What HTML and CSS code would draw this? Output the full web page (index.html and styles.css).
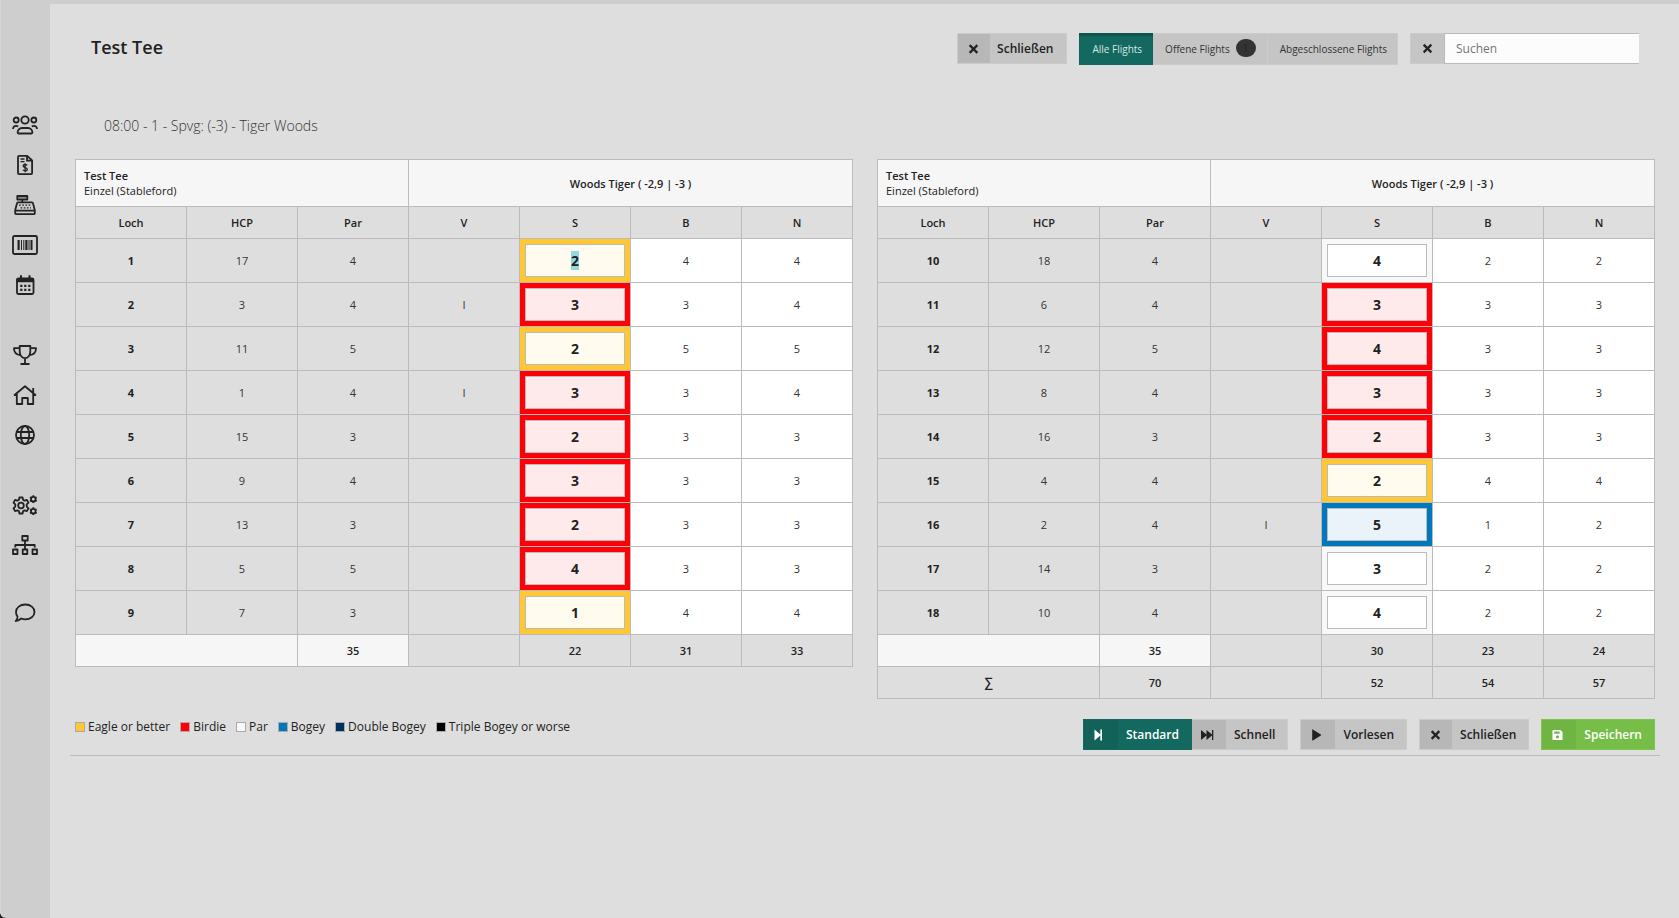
FILE: index.html
```html
<!DOCTYPE html>
<html lang="de">
<head>
<meta charset="utf-8">
<title>Test Tee</title>
<link rel="stylesheet" href="styles.css">
</head>
<body>
<nav class="sidebar" aria-label="Hauptmenü">
  <div class="nav-group">
    <a href="#" aria-label="Spieler"><svg viewBox="0 0 26 20"><circle cx="13" cy="5" r="3.7"/><circle cx="4.200" cy="5" r="2.500"/><circle cx="21.800" cy="5" r="2.500"/><path d="M6.500 18.500h13c.6 0 .9-.4.9-.9 0-2.600-1.900-4.600-4.400-4.600h-6c-2.500 0-4.400 2-4.400 4.600 0 .5.300.9.900.9zM1 14c.2-2 1.400-3.200 3-3.200.9 0 1.600.2 2.200.7M25 14c-.2-2-1.400-3.200-3-3.200-.9 0-1.600.2-2.200.7"/></svg></a>
    <a href="#" aria-label="Rechnungen"><svg viewBox="0 0 26 20"><path d="M7.500.9h7.700l4.900 4.500v12.700c0 .6-.4 1-1 1H7c-.6 0-1-.4-1-1V1.900c0-.6.4-1 1-1zM15 1v4.700h5"/><path class="thin" d="M8.500 4h4M8.500 6.700h4M15.200 10.300c-.5-.6-1.200-.8-2.100-.8-1.200 0-2 .6-2 1.500 0 2 4.200 1.200 4.200 3.200 0 1-.9 1.600-2.100 1.600-1 0-1.800-.3-2.300-.9M13.100 8.200v9"/></svg></a>
    <a href="#" aria-label="Kasse"><svg viewBox="0 0 26 20"><path class="grey" d="M5.300 1h10v3.600h-10z"/><path d="M10.300 4.600v2.900M6 7.400h14c.5 0 .9.300 1 .8l1.800 7.100v3c0 .5-.3.800-.8.800H4c-.5 0-.8-.3-.8-.8v-3L5 8.200c.1-.5.500-.8 1-.8zM3.400 15.600h19.200"/><path class="thin" stroke-dasharray="1.700 1.500" d="M7 10.200h12.500M8.500 12.800h10.500"/></svg></a>
    <a href="#" aria-label="Artikel"><svg viewBox="0 0 26 20"><rect x="1" y="1" width="24" height="18" rx="1.500"/><path class="solid" d="M5.500 5h2.200v10H5.500zM9 5h1v10H9zM11.300 5h1v10h-1zM13.300 5h2.200v10h-2.200zM16.500 5h1v10h-1zM18.500 5h2v10h-2z"/></svg></a>
    <a href="#" aria-label="Kalender"><svg viewBox="0 0 26 20"><rect x="5" y="3.500" width="16.500" height="15.500" rx="1.500"/><path class="solid" d="M4.500 3.500h17.500v3.700H4.500zM8 .3h2v4H8zM16.500.3h2v4h-2z"/><path stroke-width="2.200" stroke-dasharray="2.200 1.800" d="M8.200 10.800h11M8.200 14.800h11"/></svg></a>
  </div>
  <div class="nav-group">
    <a href="#" aria-label="Turniere"><svg viewBox="0 0 26 20"><path d="M7.700 1h10.600v5.500c0 3.800-2.300 6.700-5.300 6.700s-5.300-2.900-5.300-6.700zM7.700 3.200H2c0 4 2.300 6.500 6.500 7M18.300 3.200H24c0 4-2.300 6.500-6.500 7M13 13.200v5M8.500 19h9"/></svg></a>
    <a href="#" aria-label="Startseite"><svg viewBox="0 0 26 20"><path d="M2 10.500 13 1.300l11 9.200M4.800 8.500V19h5.400v-6h5.600v6h5.400V8.500M21.200 3v5"/></svg></a>
    <a href="#" aria-label="Web"><svg viewBox="0 0 26 20"><circle cx="13" cy="10" r="9"/><ellipse cx="13" cy="10" rx="4.200" ry="9"/><path d="M4.500 7h17M4.500 13h17"/></svg></a>
  </div>
  <div class="nav-group">
    <a href="#" aria-label="Einstellungen"><svg viewBox="0 0 26 20"><circle cx="9" cy="10.500" r="2.800"/><path d="M7.400 2.500h3.200l.5 2.400 1.500.8 2.300-.8 1.600 2.800-1.800 1.700v2.200l1.800 1.700-1.600 2.800-2.300-.8-1.500.8-.5 2.400H7.400l-.5-2.400-1.500-.8-2.300.8-1.600-2.800 1.800-1.700V9.400L1.500 7.700l1.600-2.800 2.300.8 1.500-.8z"/><circle cx="21.300" cy="4.200" r="2.300"/><circle cx="21.300" cy="16.200" r="2.300"/><path d="M21.300.3v1.600M21.300 6.500v1.600M18 2.200l1.400.8M23.200 5.400l1.400.8M18 6.200l1.400-.8M23.200 3l1.400-.8M21.300 12.300v1.600M21.300 18.500V20M18 14.200l1.400.8M23.200 17.400l1.400.8M18 18.200l1.400-.8M23.200 15l1.400-.8"/></svg></a>
    <a href="#" aria-label="Struktur"><svg viewBox="0 0 26 20"><path d="M10.300 1h5.400v4.500h-5.400zM1 14.500h4.500V19H1zM10.700 14.500h4.600V19h-4.600zM20.500 14.500H25V19h-4.500zM13 5.500v9M3.300 12.500V10h19.400v2.500"/></svg></a>
  </div>
  <div class="nav-group">
    <a href="#" aria-label="Nachrichten"><svg viewBox="0 0 26 20"><path d="M13.300 1.500c5.200 0 9.200 3.200 9.200 7.400s-4 7.400-9.200 7.400c-1.500 0-2.900-.3-4.100-.8C7.500 17 5.500 18 3.700 18c1.200-1.300 1.800-2.700 1.900-4.200C4.600 12.500 4 10.800 4 8.900c0-4.200 4.100-7.400 9.300-7.400z"/></svg></a>
  </div>
</nav>
<main class="content">
  <header class="topbar">
    <h1>Test Tee</h1>
    <div class="tools">
      <button class="btn compact" type="button"><span class="ico"><svg viewBox="0 0 10 10"><path class="x" d="M1.500 1.500l7 7M8.500 1.500l-7 7"/></svg></span><span class="label">Schließen</span></button>
      <div class="filters">
        <button class="filter active" type="button">Alle Flights</button>
        <button class="filter" type="button">Offene Flights <span class="badge">1</span></button>
        <button class="filter" type="button">Abgeschlossene Flights</button>
      </div>
      <div class="search">
        <button class="clear" type="button" aria-label="Suche leeren"><svg viewBox="0 0 10 10"><path class="x" d="M1.500 1.500l7 7M8.500 1.500l-7 7"/></svg></button>
        <input type="text" placeholder="Suchen" aria-label="Suchen">
      </div>
    </div>
  </header>
  <h2>08:00 - 1 - Spvg: (-3) - Tiger Woods</h2>
  <section class="scorecard">
    <div class="cards">
      <table>
        <thead>
          <tr class="title"><th colspan="3" class="event">Test Tee<span>Einzel (Stableford)</span></th><th colspan="4">Woods Tiger ( -2,9 | -3 )</th></tr>
          <tr><th>Loch</th><th>HCP</th><th>Par</th><th>V</th><th>S</th><th>B</th><th>N</th></tr>
        </thead>
        <tbody>
          <tr><th>1</th><td>17</td><td>4</td><td></td><td class="score eagle"><input id="first-score" value="2" aria-label="Loch 1"></td><td class="pts">4</td><td class="pts">4</td></tr>
          <tr><th>2</th><td>3</td><td>4</td><td>I</td><td class="score birdie"><input value="3" aria-label="Loch 2"></td><td class="pts">3</td><td class="pts">4</td></tr>
          <tr><th>3</th><td>11</td><td>5</td><td></td><td class="score eagle"><input value="2" aria-label="Loch 3"></td><td class="pts">5</td><td class="pts">5</td></tr>
          <tr><th>4</th><td>1</td><td>4</td><td>I</td><td class="score birdie"><input value="3" aria-label="Loch 4"></td><td class="pts">3</td><td class="pts">4</td></tr>
          <tr><th>5</th><td>15</td><td>3</td><td></td><td class="score birdie"><input value="2" aria-label="Loch 5"></td><td class="pts">3</td><td class="pts">3</td></tr>
          <tr><th>6</th><td>9</td><td>4</td><td></td><td class="score birdie"><input value="3" aria-label="Loch 6"></td><td class="pts">3</td><td class="pts">3</td></tr>
          <tr><th>7</th><td>13</td><td>3</td><td></td><td class="score birdie"><input value="2" aria-label="Loch 7"></td><td class="pts">3</td><td class="pts">3</td></tr>
          <tr><th>8</th><td>5</td><td>5</td><td></td><td class="score birdie"><input value="4" aria-label="Loch 8"></td><td class="pts">3</td><td class="pts">3</td></tr>
          <tr><th>9</th><td>7</td><td>3</td><td></td><td class="score eagle"><input value="1" aria-label="Loch 9"></td><td class="pts">4</td><td class="pts">4</td></tr>
        </tbody>
        <tfoot>
          <tr><td colspan="2" class="light"></td><td class="light">35</td><td></td><td>22</td><td>31</td><td>33</td></tr>
        </tfoot>
      </table>
      <table>
        <thead>
          <tr class="title"><th colspan="3" class="event">Test Tee<span>Einzel (Stableford)</span></th><th colspan="4">Woods Tiger ( -2,9 | -3 )</th></tr>
          <tr><th>Loch</th><th>HCP</th><th>Par</th><th>V</th><th>S</th><th>B</th><th>N</th></tr>
        </thead>
        <tbody>
          <tr><th>10</th><td>18</td><td>4</td><td></td><td class="score par"><input value="4" aria-label="Loch 10"></td><td class="pts">2</td><td class="pts">2</td></tr>
          <tr><th>11</th><td>6</td><td>4</td><td></td><td class="score birdie"><input value="3" aria-label="Loch 11"></td><td class="pts">3</td><td class="pts">3</td></tr>
          <tr><th>12</th><td>12</td><td>5</td><td></td><td class="score birdie"><input value="4" aria-label="Loch 12"></td><td class="pts">3</td><td class="pts">3</td></tr>
          <tr><th>13</th><td>8</td><td>4</td><td></td><td class="score birdie"><input value="3" aria-label="Loch 13"></td><td class="pts">3</td><td class="pts">3</td></tr>
          <tr><th>14</th><td>16</td><td>3</td><td></td><td class="score birdie"><input value="2" aria-label="Loch 14"></td><td class="pts">3</td><td class="pts">3</td></tr>
          <tr><th>15</th><td>4</td><td>4</td><td></td><td class="score eagle"><input value="2" aria-label="Loch 15"></td><td class="pts">4</td><td class="pts">4</td></tr>
          <tr><th>16</th><td>2</td><td>4</td><td>I</td><td class="score bogey"><input value="5" aria-label="Loch 16"></td><td class="pts">1</td><td class="pts">2</td></tr>
          <tr><th>17</th><td>14</td><td>3</td><td></td><td class="score par"><input value="3" aria-label="Loch 17"></td><td class="pts">2</td><td class="pts">2</td></tr>
          <tr><th>18</th><td>10</td><td>4</td><td></td><td class="score par"><input value="4" aria-label="Loch 18"></td><td class="pts">2</td><td class="pts">2</td></tr>
        </tbody>
        <tfoot>
          <tr><td colspan="2" class="light"></td><td class="light">35</td><td></td><td>30</td><td>23</td><td>24</td></tr>
          <tr><td colspan="2" class="sum">∑</td><td>70</td><td></td><td>52</td><td>54</td><td>57</td></tr>
        </tfoot>
      </table>
    </div>
    <div class="actions">
      <ul class="legend">
        <li><i class="swatch eagle"></i>Eagle or better</li>
        <li><i class="swatch birdie"></i>Birdie</li>
        <li><i class="swatch par"></i>Par</li>
        <li><i class="swatch bogey"></i>Bogey</li>
        <li><i class="swatch double"></i>Double Bogey</li>
        <li><i class="swatch triple"></i>Triple Bogey or worse</li>
      </ul>
      <div class="buttons">
        <div class="pair">
          <button class="btn teal" type="button"><span class="ico"><svg viewBox="0 0 10 12"><path class="fill" d="M1 .5v11L6.800 6.600V11.500h1.700V.5H6.800v4.900z"/></svg></span><span class="label">Standard</span></button>
          <button class="btn" type="button"><span class="ico"><svg class="wide" viewBox="0 0 14 12"><path class="fill" d="M1 1v10l5.500-4.500V11L12 6.500V11h1.300V1H12v4.500L6.500 1v4.500z"/></svg></span><span class="label">Schnell</span></button>
        </div>
        <button class="btn" type="button"><span class="ico"><svg viewBox="0 0 11 14"><path class="fill" d="M.5.8v12.400c0 .4.400.5.700.3l9.400-6c.4-.2.400-.8 0-1L1.200.5C.9.300.5.400.5.800z"/></svg></span><span class="label">Vorlesen</span></button>
        <button class="btn narrow" type="button"><span class="ico"><svg viewBox="0 0 10 10"><path class="x" d="M1.500 1.500l7 7M8.500 1.500l-7 7"/></svg></span><span class="label">Schließen</span></button>
        <button class="btn green" type="button"><span class="ico"><svg viewBox="0 0 12 12"><path class="fill" fill-rule="evenodd" d="M1.500.5h7.700l2.300 2.300v7.700c0 .6-.4 1-1 1h-9c-.6 0-1-.4-1-1v-9c0-.6.4-1 1-1zM2.500 2.200v2.400h5.800V2.200zM6 6.300a1.700 1.700 0 1 0 0 3.400 1.700 1.700 0 0 0 0-3.400z"/></svg></span><span class="label">Speichern</span></button>
      </div>
    </div>
  </section>
</main>
<script src="main.js"></script>
</body>
</html>
```
FILE: styles.css
```css
* { box-sizing: border-box; }

html { background: #1a1a1a; }

body {
  margin: 0;
  min-height: 100vh;
  display: flex;
  font-family: "Open Sans", "Noto Sans", sans-serif;
  font-size: 12px;
  color: #222;
  background: #cecece;
  border-bottom-left-radius: 6px;
}

button, input { font: inherit; color: inherit; }

.sidebar {
  flex: none;
  width: 50px;
  padding: 105px 1px 0 0;
  border-left: 1px solid #d6d6d6;
  border-bottom-left-radius: 6px;
}
.nav-group { margin-bottom: 30px; }
.nav-group:nth-last-child(2) { margin-bottom: 28px; }
.sidebar a {
  display: flex;
  height: 40px;
  align-items: center;
  justify-content: center;
}
.sidebar svg {
  width: 26px;
  height: 20px;
  overflow: visible;
  fill: none;
  stroke: #222;
  stroke-width: 1.8;
  stroke-linejoin: round;
}
.sidebar .thin { stroke-width: 1.3; }
.sidebar .grey { fill: #888; }
.sidebar .solid { fill: #222; stroke: none; }

.content {
  flex: 1;
  min-width: 0;
  margin-top: 4px;
  padding: 29px 19px 0 20px;
  background: #dedede;
}

.topbar {
  display: flex;
  justify-content: space-between;
  align-items: flex-start;
  padding: 0 21px;
}
h1 { margin: 0; font-size: 18px; line-height: 28px; font-weight: 600; }
h2 {
  margin: 48px 34px 21px;
  font-size: 14px;
  line-height: 25px;
  font-weight: 300;
  color: #333;
}

.tools { display: flex; gap: 12px; align-items: flex-start; }

.btn {
  display: flex;
  height: 31px;
  padding: 0;
  border: 1px solid #cbcbcb;
  background: #c5c5c5;
  font-weight: 600;
}
.ico {
  display: flex;
  align-items: center;
  justify-content: center;
  width: 34px;
  height: 100%;
  padding-right: 4px;
  background: #b7b7b7;
}
.label { padding: 0 12px 0 8px; line-height: 29px; }
.compact .ico, .narrow .ico { width: 32px; padding: 0 2px 0 0; }
.compact .label { padding: 0 13px 0 7px; }
.btn svg, .clear svg { width: 11px; height: 11px; }
.ico svg { height: 12px; }
.btn .wide { width: 14px; }
.fill { fill: currentColor; }
.x { fill: none; stroke: #222; stroke-width: 2; }
.teal { background: #13695f; border-color: #13695f; color: #fff; }
.teal .ico { background: #12625a; }
.green { background: #76be48; border-color: #7bc74c; color: #fff; }
.green .ico { background: #70b544; }

.filters { display: flex; }
.filter {
  display: flex;
  align-items: center;
  gap: 6px;
  height: 32px;
  padding: 0 10px 0 12px;
  border: 1px solid #cbcbcb;
  border-left-width: 0;
  background: #c5c5c5;
  color: #333;
  font-size: 10px;
}
.filter.active {
  border: 0;
  padding: 0 11px 0 13px;
  background: #13695f;
  color: #d7e6e4;
  box-shadow: inset 0 3px 2px #0d544c;
}
.badge {
  width: 20px;
  height: 18px;
  margin: 0 1px 2px 0;
  border-radius: 9px;
  background: #333;
  color: #222;
  line-height: 18px;
}

.search { display: flex; height: 31px; }
.clear {
  display: flex;
  align-items: center;
  justify-content: center;
  width: 34px;
  padding: 0;
  border: 1px solid #cbcbcb;
  border-right: 0;
  background: #c5c5c5;
}
.search input {
  width: 195px;
  padding: 0 11px;
  border: 1px solid #bbb;
  border-right: 0;
  background: #fcfcfc;
}
.search input::placeholder { color: #757575; }

.scorecard { padding: 0 5px 5px; border-bottom: 1px solid #bbb; margin: 0; }
.cards {
  display: grid;
  grid-template-columns: 1fr 1fr;
  gap: 24px;
  align-items: start;
}
table {
  width: 100%;
  table-layout: fixed;
  border-collapse: collapse;
  font-size: 11px;
  line-height: 15px;
  text-align: center;
}
th, td { height: 32px; padding: 0; border: 1px solid #bbb; }
th { font-weight: 600; }
.title th { height: 47px; background: #f6f6f6; }
.title .event { padding: 0 8px; text-align: left; }
.event span { display: block; font-weight: 400; }
tbody th { font-weight: 700; }
tbody td, tbody th { height: 44px; }
tbody td { color: #333; }
.pts { background: #fff; }
tfoot td { font-weight: 600; }
.light { background: #f6f6f6; }
.sum { font-size: 13px; }

.eagle { background: #ffc733; }
.birdie { background: #ff0008; }
.par { background: #f8f8f8; }
.bogey { background: #0078bb; }
.double { background: #002f62; }
.triple { background: #000; }

.score { padding: 5px; }
.score input {
  display: block;
  width: 100%;
  height: 33px;
  padding: 0;
  border: 1px solid #bbb;
  outline: 0;
  background: #fff;
  color: #222;
  font-size: 14px;
  font-weight: 700;
  text-align: center;
}
.eagle input { background: #fffbef; }
.birdie input { background: #ffeaeb; }
.bogey input { background: #eaf3fa; }
.score input::selection { background: rgba(146, 217, 223, 0.99); color: #222; }

.actions {
  display: flex;
  justify-content: space-between;
  align-items: flex-start;
  padding-top: 20px;
}
.legend {
  display: flex;
  gap: 10px;
  margin: 0;
  padding: 0;
  list-style: none;
  line-height: 16px;
}
.legend li { display: flex; align-items: center; gap: 3px; }
.swatch { width: 10px; height: 10px; border: 1px solid #aaa; }
.buttons { display: flex; gap: 12px; }
.pair { display: flex; }
.pair .btn + .btn { border-left: 0; }
```
FILE: main.js
```js
const firstScore = document.getElementById('first-score');
firstScore.focus();
firstScore.select();
```
